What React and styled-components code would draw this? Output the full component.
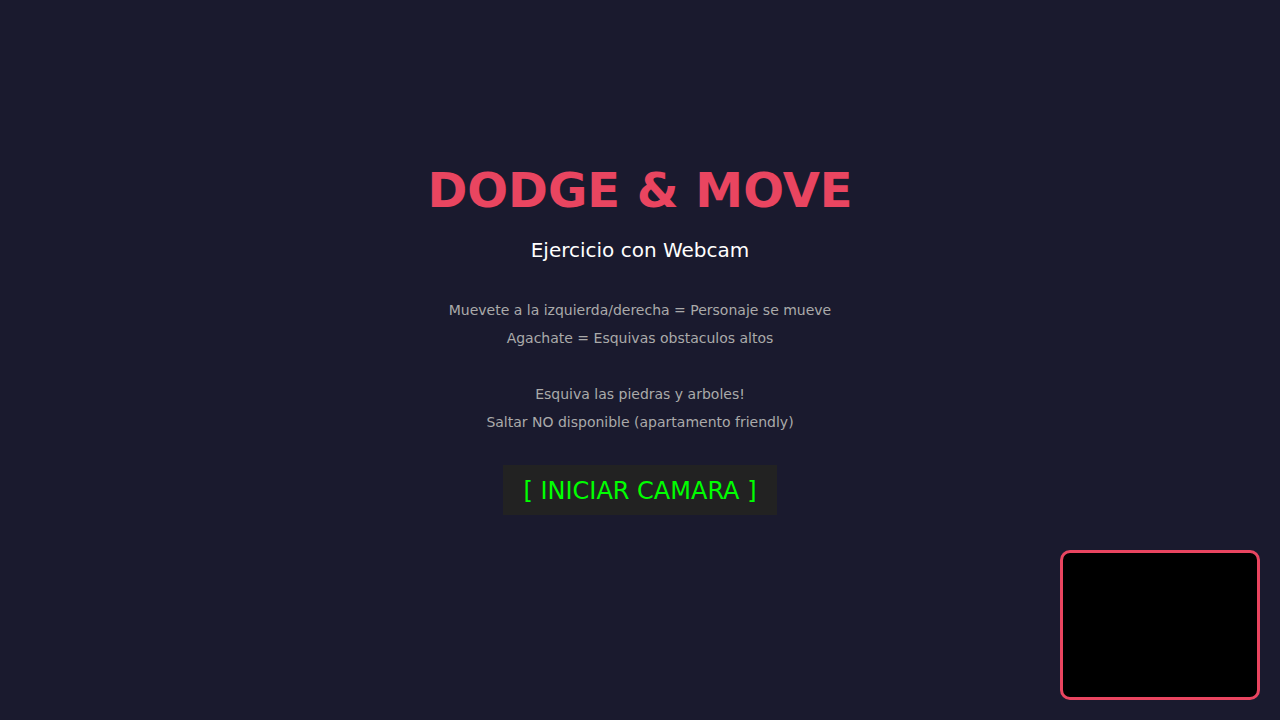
import React from "react";
import styled, { createGlobalStyle } from "styled-components";

const Global = createGlobalStyle`
  html, body { margin: 0; padding: 0; height: 100%; }
  body { background: #1a1a2e; font-family: "DejaVu Sans", sans-serif; overflow: hidden; }
  #root { height: 100%; }
`;

const Screen = styled.div`
  height: 720px;
  display: flex;
  flex-direction: column;
  align-items: center;
  justify-content: center;
  text-align: center;
  padding-bottom: 43px;
  box-sizing: border-box;
`;

const Title = styled.h1`
  margin: 0 0 20px;
  font-size: 48px;
  font-weight: bold;
  color: #e94560;
`;

const Subtitle = styled.p`
  margin: 0 0 34px;
  font-size: 20px;
  color: #ffffff;
`;

const Instructions = styled.div`
  font-size: 14px;
  line-height: 28px;
  color: #aaaaaa;
  margin-bottom: 29px;
`;

const Line = styled.div`
  min-height: 28px;
`;

const StartButton = styled.button`
  background: #222222;
  color: #00ff00;
  border: none;
  font-family: "DejaVu Sans", sans-serif;
  font-size: 24px;
  padding: 12px 20px 10px;
  cursor: pointer;
`;

const Webcam = styled.div`
  position: fixed;
  right: 20px;
  bottom: 20px;
  width: 200px;
  height: 150px;
  box-sizing: border-box;
  border: 3px solid #e94560;
  border-radius: 10px;
  background: #000;
`;

export default function App() {
  return (
    <>
      <Global />
      <Screen>
        <Title>DODGE &amp; MOVE</Title>
        <Subtitle>Ejercicio con Webcam</Subtitle>
        <Instructions>
          <Line>Muevete a la izquierda/derecha = Personaje se mueve</Line>
          <Line>Agachate = Esquivas obstaculos altos</Line>
          <Line />
          <Line>Esquiva las piedras y arboles!</Line>
          <Line>Saltar NO disponible (apartamento friendly)</Line>
        </Instructions>
        <StartButton>[ INICIAR CAMARA ]</StartButton>
      </Screen>
      <Webcam />
    </>
  );
}
